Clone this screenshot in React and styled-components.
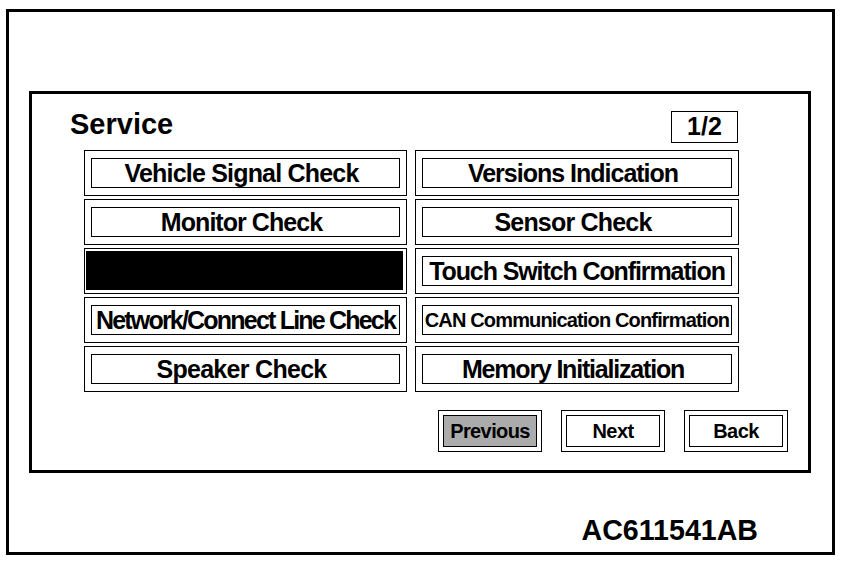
import React from "react";
import styled, { createGlobalStyle } from "styled-components";

const Global = createGlobalStyle`
  html, body { margin: 0; padding: 0; background: #fff; }
  body { font-family: "Liberation Sans", Arial, Helvetica, sans-serif; color: #000; }
  * { box-sizing: border-box; }
`;

const Outer = styled.div`
  margin: 9px 0 0 6px;
  width: 829px;
  height: 546px;
  border: 3px solid #000;
  padding: 79px 21px 0 20px;
  display: flex;
  flex-direction: column;
`;

const Screen = styled.div`
  height: 382px;
  border: 3px solid #000;
  display: flex;
  flex-direction: column;
`;

const Header = styled.div`
  display: flex;
  align-items: flex-start;
  justify-content: space-between;
  height: 32px;
  margin: 17px 70px 7px 38px;
`;

const Title = styled.div`
  font-size: 29px;
  font-weight: 700;
  line-height: 32px;
  margin-top: -3px;
`;

const PageBox = styled.div`
  width: 67px;
  height: 32px;
  border: 1.5px solid #000;
  font-size: 25px;
  font-weight: 700;
  line-height: 29px;
  text-align: center;
`;

const Grid = styled.div`
  margin-left: 52px;
  width: 655px;
  display: grid;
  grid-template-columns: 323px 324px;
  column-gap: 8px;
  grid-auto-rows: 46px;
  row-gap: 3px;
`;

const Cell = styled.div`
  border: 1px solid #000;
  padding: ${(p) => (p.$blank ? "2px 3px 3px 1px" : "7px 6px")};
  display: flex;
`;

const Label = styled.div`
  flex: 1;
  border: ${(p) => (p.$blank ? "none" : "1px solid #000")};
  background: ${(p) => (p.$blank ? "#000" : "#fff")};
  padding-right: ${(p) => (p.$full ? 0 : 8)}px;
  font-weight: 700;
  font-size: ${(p) => p.$size || 25}px;
  letter-spacing: ${(p) => (p.$ls != null ? p.$ls : -0.9)}px;
  line-height: 29px;
  text-align: center;
  white-space: nowrap;
  overflow: hidden;
`;

const Footer = styled.div`
  display: flex;
  justify-content: flex-end;
  gap: 19px;
  margin: 18px 20px 0 0;
`;

const NavButton = styled.div`
  width: 104px;
  height: 42px;
  border: 1px solid #000;
  padding: 4px;
  display: flex;
`;

const NavLabel = styled.div`
  flex: 1;
  border: 1px solid #000;
  background: ${(p) => (p.$active ? "#ababab" : "#fff")};
  font-size: 20px;
  font-weight: 700;
  letter-spacing: -0.6px;
  line-height: 30px;
  text-align: center;
`;

const Caption = styled.div`
  margin-top: 41px;
  align-self: flex-end;
  margin-right: 53px;
  font-size: 28.6px;
  font-weight: 700;
  line-height: 32px;
`;

const items = [
  { text: "Vehicle Signal Check", ls: -0.8 },
  { text: "Versions Indication", ls: -1.0 },
  { text: "Monitor Check", ls: -0.95 },
  { text: "Sensor Check", ls: -0.8 },
  { text: "", blank: true },
  { text: "Touch Switch Confirmation", ls: -1.1, full: true },
  { text: "Network/Connect Line Check", ls: -1.8, full: true },
  { text: "CAN Communication Confirmation", size: 20, ls: -0.85, full: true },
  { text: "Speaker Check", ls: -0.7 },
  { text: "Memory Initialization", ls: -1.2 },
];

export default function App() {
  return (
    <>
      <Global />
      <Outer>
        <Screen>
          <Header>
            <Title>Service</Title>
            <PageBox>1/2</PageBox>
          </Header>
          <Grid>
            {items.map((it, i) => (
              <Cell key={i} $blank={it.blank}>
                <Label $blank={it.blank} $size={it.size} $ls={it.ls} $full={it.full}>
                  {it.text}
                </Label>
              </Cell>
            ))}
          </Grid>
          <Footer>
            <NavButton>
              <NavLabel $active>Previous</NavLabel>
            </NavButton>
            <NavButton>
              <NavLabel>Next</NavLabel>
            </NavButton>
            <NavButton>
              <NavLabel>Back</NavLabel>
            </NavButton>
          </Footer>
        </Screen>
        <Caption>AC611541AB</Caption>
      </Outer>
    </>
  );
}
